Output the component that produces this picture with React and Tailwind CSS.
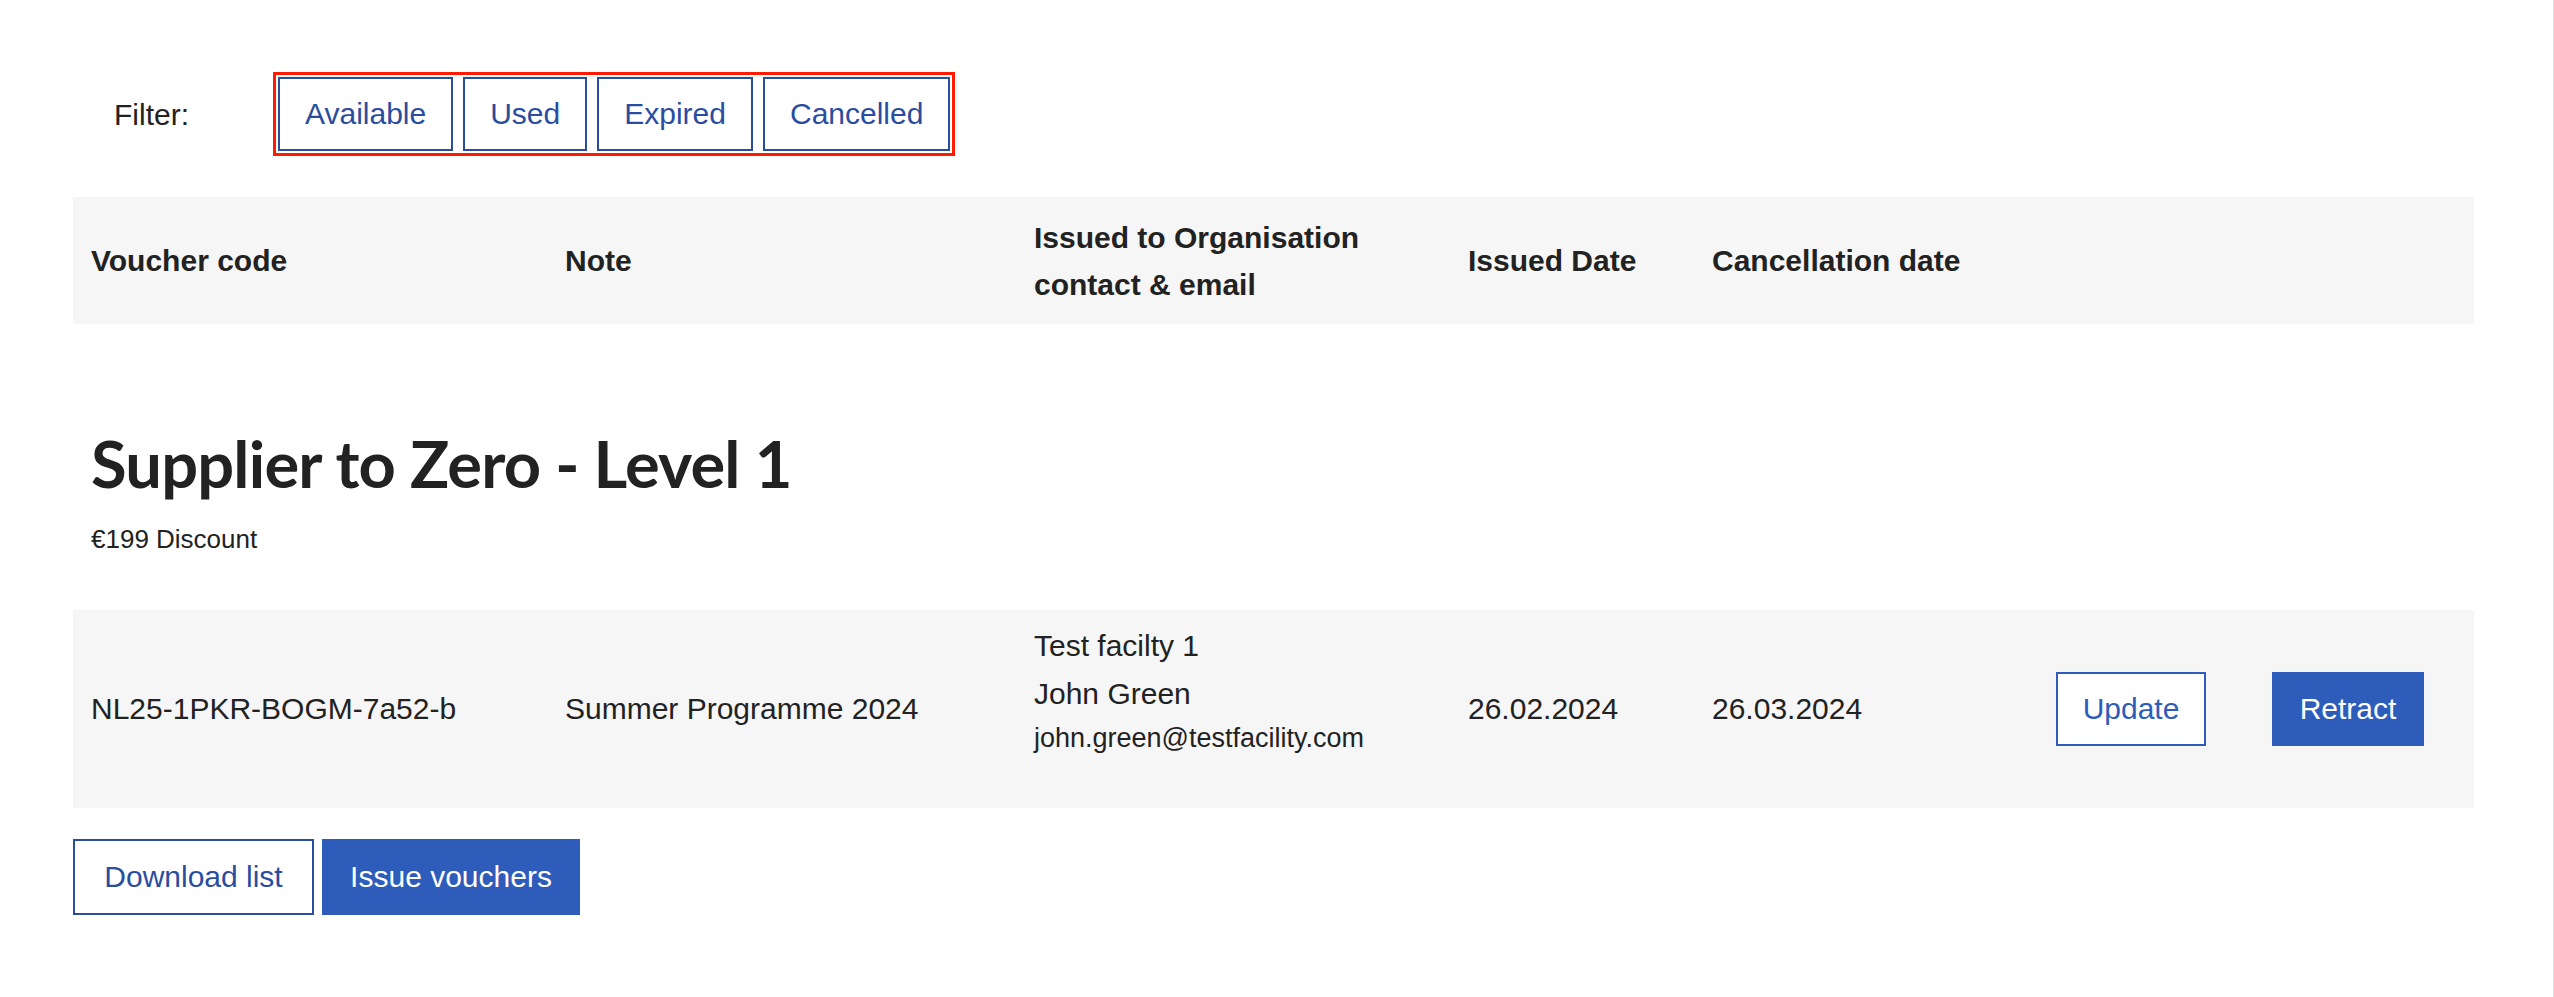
import React from 'react';

const COLS = 'grid grid-cols-[474px_469px_434px_244px_344px_216px_1fr]';

const filters = ['Available', 'Used', 'Expired', 'Cancelled'];

function FilterButton({ label }) {
  return (
    <button className="h-[74px] px-[25px] border-2 border-[#2a4d9f] bg-white text-[#2a4d9f] text-[30px] leading-none">
      {label}
    </button>
  );
}

export default function App() {
  return (
    <div
      className="min-h-[997px] bg-white border-r border-[#dcdcdc] pl-[73px] pr-[79px] pt-[72px] text-[#222222]"
      style={{ fontFamily: '"Liberation Sans", Arial, sans-serif' }}
    >
      {/* Filter row */}
      <div className="flex items-center">
        <span className="w-[200px] pl-[41px] text-[30px]">Filter:</span>
        <div className="flex gap-[10px] border-[3px] border-[#ff1a00] p-[2px]">
          {filters.map((f) => (
            <FilterButton key={f} label={f} />
          ))}
        </div>
      </div>

      {/* Table header */}
      <div className={`${COLS} mt-[41px] h-[127px] items-center bg-[#f6f6f6] text-[30px] font-bold leading-[47px]`}>
        <div className="pl-[18px]">Voucher code</div>
        <div className="pl-[18px]">Note</div>
        <div className="pl-[18px]">
          Issued to Organisation
          <br />
          contact &amp; email
        </div>
        <div className="pl-[18px]">Issued Date</div>
        <div className="pl-[18px]">Cancellation date</div>
        <div />
        <div />
      </div>

      {/* Voucher group */}
      <div className="pl-[18px] mt-[100px]">
        <h2
          className="text-[65px] font-bold leading-[79px] tracking-[-0.8px]"
          style={{ fontFamily: 'Lato, "Open Sans", sans-serif' }}
        >
          Supplier to Zero - Level 1
        </h2>
        <p className="mt-[16px] text-[26px] leading-[40px]">€199 Discount</p>
      </div>

      {/* Data row */}
      <div className={`${COLS} mt-[51px] h-[198px] items-center bg-[#f6f6f6] text-[30px] leading-[48px]`}>
        <div className="pl-[18px]">NL25-1PKR-BOGM-7a52-b</div>
        <div className="pl-[18px]">Summer Programme 2024</div>
        <div className="pl-[18px] mb-[38px]">
          <div>Test facilty 1</div>
          <div>John Green</div>
          <div className="text-[27px] leading-[40px]">john.green@testfacility.com</div>
        </div>
        <div className="pl-[18px]">26.02.2024</div>
        <div className="pl-[18px]">26.03.2024</div>
        <div className="pl-[18px]">
          <button className="h-[74px] w-[150px] border-2 border-[#2d5cba] bg-white text-[#2d5cba] text-[30px] leading-none">
            Update
          </button>
        </div>
        <div className="pl-[18px]">
          <button className="h-[74px] w-[152px] bg-[#2d5cba] text-white text-[30px] leading-none">
            Retract
          </button>
        </div>
      </div>

      {/* Actions */}
      <div className="flex gap-[8px] mt-[31px]">
        <button className="h-[76px] w-[241px] border-2 border-[#2a4d9f] bg-white text-[#2a4d9f] text-[30px] leading-none">
          Download list
        </button>
        <button className="h-[76px] w-[258px] bg-[#2d5cba] text-white text-[30px] leading-none">
          Issue vouchers
        </button>
      </div>
    </div>
  );
}
